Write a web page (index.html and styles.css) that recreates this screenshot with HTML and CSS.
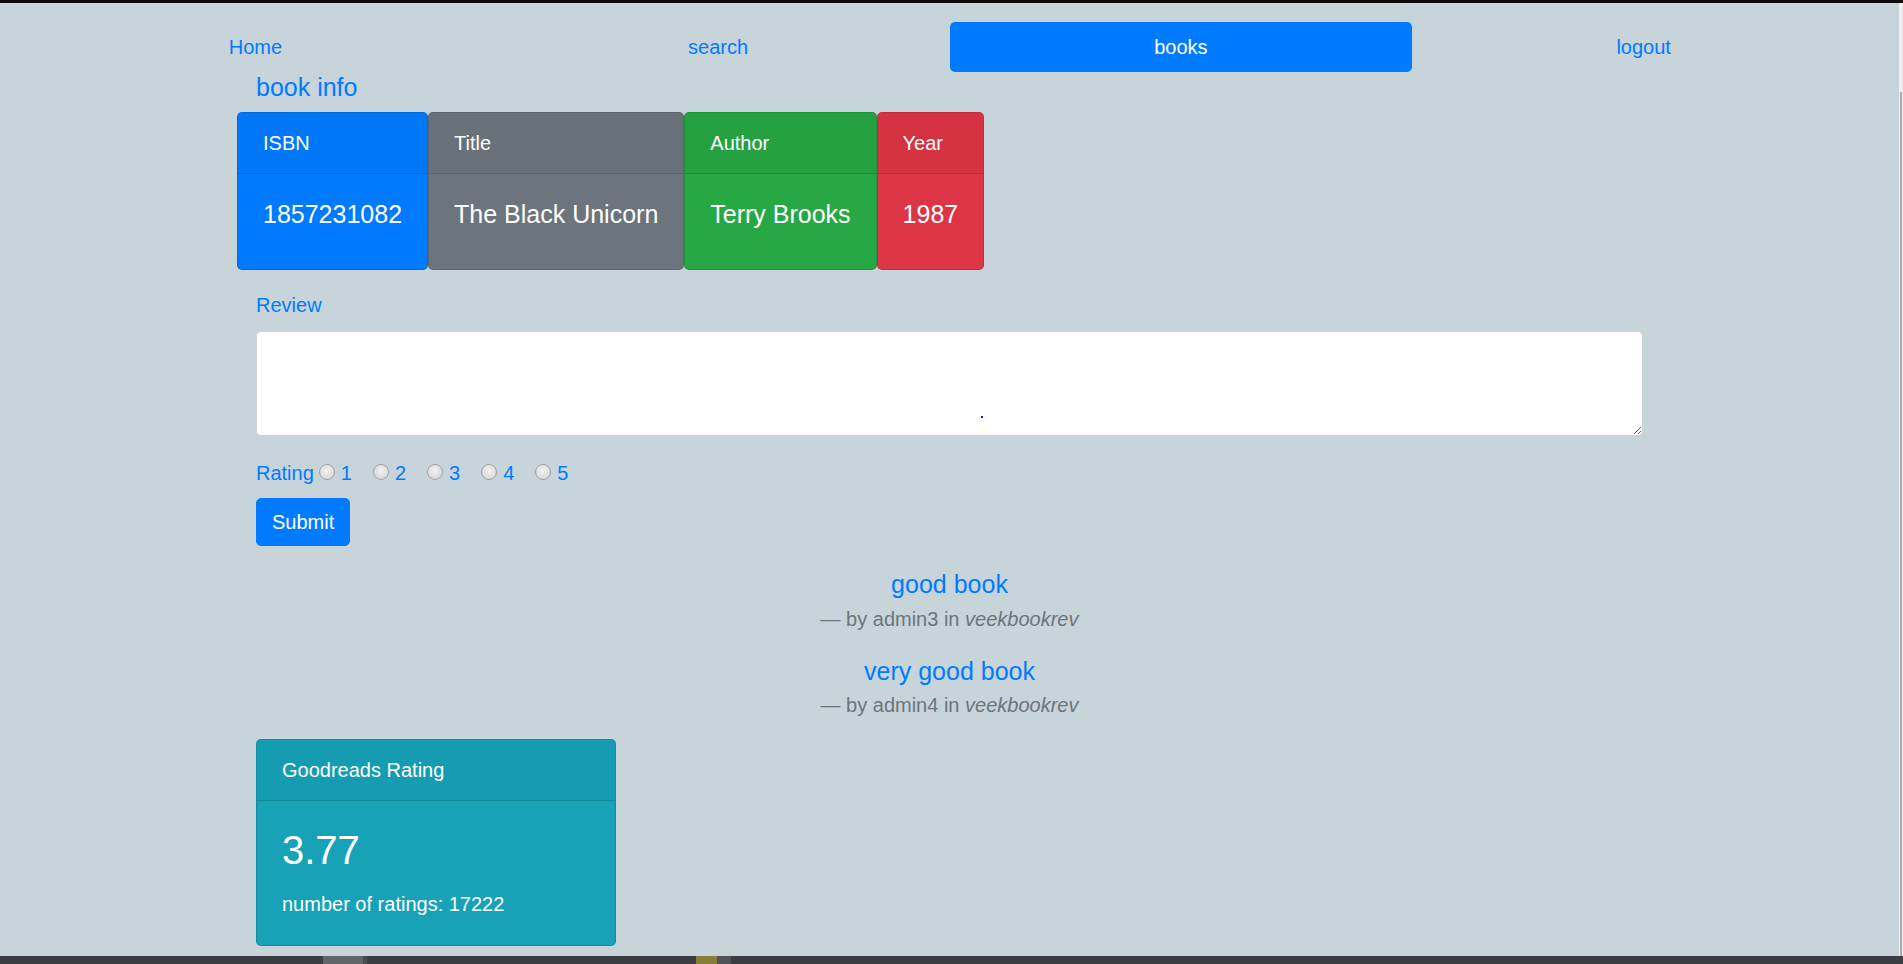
FILE: index.html
```html
<!DOCTYPE html>
<html lang="en">
<head>
<meta charset="utf-8">
<title>book info</title>
<link rel="stylesheet" href="styles.css">
</head>
<body>
<div class="topbar"></div>
<div class="viewport">
  <div class="page">
    <nav class="nav">
      <a class="nav-link" href="#">Home</a>
      <a class="nav-link" href="#">search</a>
      <a class="nav-link active" href="#">books</a>
      <a class="nav-link" href="#">logout</a>
    </nav>
    <div class="container">
      <h5 class="section-title">book info</h5>
      <div class="card-row">
        <div class="card bg-primary">
          <div class="card-header">ISBN</div>
          <div class="card-body"><h5 class="card-title">1857231082</h5></div>
        </div>
        <div class="card bg-secondary">
          <div class="card-header">Title</div>
          <div class="card-body"><h5 class="card-title">The Black Unicorn</h5></div>
        </div>
        <div class="card bg-success">
          <div class="card-header">Author</div>
          <div class="card-body"><h5 class="card-title">Terry Brooks</h5></div>
        </div>
        <div class="card bg-danger">
          <div class="card-header">Year</div>
          <div class="card-body"><h5 class="card-title">1987</h5></div>
        </div>
      </div>

      <form class="review-form">
        <label class="form-label" for="review">Review</label>
        <div class="textarea-wrap">
          <textarea id="review" class="form-control"></textarea>
          <span class="caret-dot"></span>
        </div>
        <div class="rating">
          <span class="rating-label">Rating</span>
          <label class="opt"><input type="radio" name="rating" value="1"><span>1</span></label>
          <label class="opt"><input type="radio" name="rating" value="2"><span>2</span></label>
          <label class="opt"><input type="radio" name="rating" value="3"><span>3</span></label>
          <label class="opt"><input type="radio" name="rating" value="4"><span>4</span></label>
          <label class="opt"><input type="radio" name="rating" value="5"><span>5</span></label>
        </div>
        <button type="button" class="btn">Submit</button>
      </form>

      <div class="reviews">
        <blockquote class="blockquote">
          <p>good book</p>
          <footer class="blockquote-footer">— by admin3 in <cite>veekbookrev</cite></footer>
        </blockquote>
        <blockquote class="blockquote">
          <p>very good book</p>
          <footer class="blockquote-footer">— by admin4 in <cite>veekbookrev</cite></footer>
        </blockquote>
      </div>

      <div class="card bg-info gr-card">
        <div class="card-header">Goodreads Rating</div>
        <div class="card-body">
          <h2 class="gr-score">3.77</h2>
          <p class="gr-count">number of ratings: 17222</p>
        </div>
      </div>
    </div>
  </div>
  <div class="scrollbar"><div class="thumb"></div></div>
</div>
<div class="bottombar">
  <span class="seg seg-gap1"></span>
  <span class="seg seg-gray"></span>
  <span class="seg seg-line"></span>
  <span class="seg seg-gap2"></span>
  <span class="seg seg-olive"></span>
  <span class="seg seg-dim"></span>
</div>
</body>
</html>
```

FILE: styles.css
```css
* { box-sizing: border-box; }

html, body {
  margin: 0;
  padding: 0;
  height: 100%;
}

body {
  display: flex;
  flex-direction: column;
  overflow: hidden;
  background: #c7d4da;
  font-family: "Liberation Sans", Arial, sans-serif;
  font-size: 20px;
  line-height: 30px;
  color: #212529;
}

.topbar {
  height: 3px;
  background: #0c0c0c;
  flex: none;
}

.viewport {
  flex: 1;
  display: flex;
  min-height: 0;
}

.page {
  flex: 1;
  min-width: 0;
}

.scrollbar {
  width: 4px;
  flex: none;
  background: #efefef;
  padding-top: 89px;
  display: flex;
}

.scrollbar .thumb {
  width: 2px;
  margin-left: 1px;
  background: #ababab;
  flex: none;
}

.bottombar {
  height: 8px;
  flex: none;
  background: #3b3f43;
  display: flex;
}

.seg { display: block; height: 100%; flex: none; }
.seg-gap1 { width: 323px; }
.seg-gray { width: 40px; background: #636668; }
.seg-line { width: 4px; background: #4a4e51; }
.seg-gap2 { width: 329px; }
.seg-olive { width: 21px; background: #857f3a; }
.seg-dim { width: 14px; background: #505458; }

/* nav */
.nav {
  display: flex;
  padding: 19px 24px 0;
}

.nav-link {
  flex: 1 1 0;
  display: block;
  text-align: center;
  padding: 10px 0;
  line-height: 30px;
  font-size: 20px;
  color: #007bff;
  text-decoration: none;
  border-radius: 5px;
}

.nav-link.active {
  background: #007bff;
  color: #fff;
}

/* container */
.container {
  width: 1425px;
  margin: 0 auto;
  padding: 0 19px;
}

.section-title {
  margin: 0 0 10px;
  font-size: 25px;
  line-height: 30px;
  font-weight: 400;
  color: #007bff;
}

/* cards */
.card-row {
  display: flex;
  align-items: flex-start;
  margin: 0 -19px;
}

.card {
  border: 1px solid rgba(0, 0, 0, 0.125);
  border-radius: 5px;
  color: #fff;
  overflow: hidden;
}

.card-header {
  padding: 15px 25px;
  line-height: 30px;
  font-size: 20px;
  background: rgba(0, 0, 0, 0.03);
  border-bottom: 1px solid rgba(0, 0, 0, 0.125);
}

.card-body {
  padding: 25px;
}

.card-title {
  margin: 0 0 15px;
  font-size: 25px;
  line-height: 30px;
  font-weight: 400;
  white-space: nowrap;
}

.bg-primary { background: #007bff; }
.bg-secondary { background: #6c757d; }
.bg-success { background: #28a745; }
.bg-danger { background: #dc3545; }
.bg-info { background: #17a2b8; }

/* form */
.review-form {
  margin: 0;
}

.form-label {
  display: block;
  margin-top: 20px;
  margin-bottom: 11px;
  color: #007bff;
}

.textarea-wrap {
  position: relative;
}

.form-control {
  display: block;
  width: 100%;
  height: 105px;
  margin: 0;
  border: 1px solid #ced4da;
  border-radius: 5px;
  background: #fff;
  font-family: inherit;
  font-size: 20px;
  padding: 7px 15px;
}

.caret-dot {
  position: absolute;
  left: 725px;
  top: 85px;
  width: 2px;
  height: 2px;
  background: #1010ff;
}

.rating {
  display: flex;
  align-items: center;
  margin-top: 22px;
  height: 30px;
  color: #007bff;
}

.rating-label {
  margin-right: 5px;
}

.opt {
  display: flex;
  align-items: center;
  margin-right: 21px;
}

.opt input {
  appearance: none;
  -webkit-appearance: none;
  width: 16px;
  height: 16px;
  margin: 0 6px 2px 0;
  border: 1px solid #a3a3a3;
  border-radius: 50%;
  background: radial-gradient(circle at 50% 40%, #f2f2f2 0%, #dedede 60%, #cfcfcf 100%);
  flex: none;
}

.btn {
  display: block;
  margin-top: 10px;
  padding: 8px 15px;
  border: 1px solid #007bff;
  border-radius: 5px;
  background: #007bff;
  color: #fff;
  font-family: inherit;
  font-size: 20px;
  line-height: 30px;
}

/* reviews */
.reviews {
  margin-top: 20px;
}

.blockquote {
  margin: 0 0 19px;
  text-align: center;
}

.blockquote p {
  margin: 0;
  font-size: 25px;
  line-height: 37.5px;
  color: #007bff;
}

.blockquote-footer {
  font-size: 20px;
  line-height: 30px;
  color: #6c757d;
}

.blockquote-footer cite {
  font-style: italic;
}

/* goodreads */
.gr-card {
  width: 360px;
  margin-top: 4px;
}

.gr-card .card-body {
  padding-bottom: 26px;
}

.gr-score {
  margin: 0 0 15px;
  font-size: 40px;
  line-height: 48px;
  font-weight: 400;
}

.gr-count {
  margin: 0;
  font-size: 20px;
  line-height: 30px;
}
```
